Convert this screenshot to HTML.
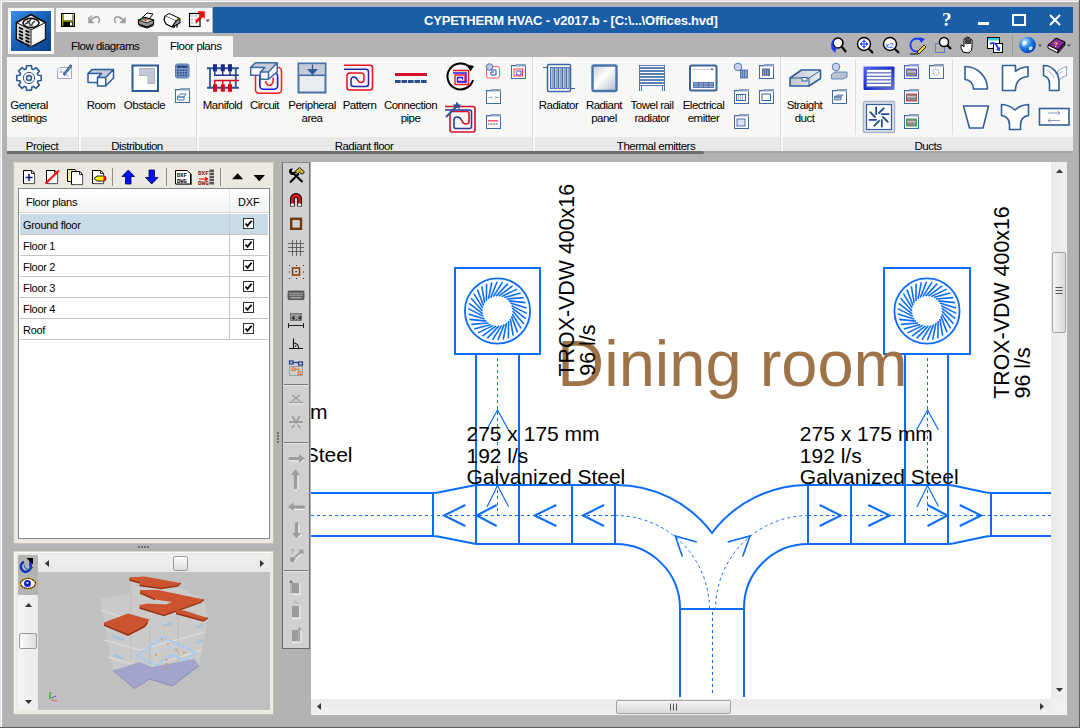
<!DOCTYPE html><html><head><meta charset="utf-8"><style>
*{margin:0;padding:0;box-sizing:border-box}
html,body{width:1080px;height:728px;overflow:hidden;background:#b3b3b3;font-family:"Liberation Sans",sans-serif;position:relative}
.a{position:absolute}
.t{position:absolute;white-space:pre;font-size:11px;color:#000;line-height:13px}
.rl{position:absolute;white-space:pre;font-size:11.5px;color:#000;line-height:13px;text-align:center;letter-spacing:-0.5px}
svg{position:absolute;overflow:visible}
</style></head><body>
<div class="a" style="left:0;top:0;width:1080px;height:1px;background:#dedede"></div>
<div class="a" style="left:0;top:1px;width:1078px;height:1px;background:#fbfbfb"></div>
<div class="a" style="left:0;top:0;width:1px;height:728px;background:#e2e2e2"></div>
<div class="a" style="left:1px;top:1px;width:1px;height:726px;background:#fbfbfb"></div>
<div class="a" style="left:1078px;top:2px;width:1px;height:725px;background:#ababab"></div>
<div class="a" style="left:1079px;top:0;width:1px;height:728px;background:#626262"></div>
<div class="a" style="left:2px;top:726px;width:1077px;height:1px;background:#ababab"></div>
<div class="a" style="left:0;top:727px;width:1080px;height:1px;background:#626262"></div>
<div class="a" style="left:8px;top:8px;width:46px;height:46px;background:#fbfbfb"></div>
<div class="a" style="left:11px;top:11px;width:40px;height:40px;background:linear-gradient(135deg,#3d8ee6 0%,#1a5fb4 50%,#0b3f86 100%)"></div>
<div class="a" style="left:56px;top:8px;width:156px;height:24px;background:#f8f8f8"></div>
<div class="a" style="left:213px;top:7px;width:860px;height:26px;background:#1a5ea8"></div>
<div class="a" style="left:424px;top:13px;font-size:13px;line-height:15px;font-weight:bold;color:#fff;white-space:pre;letter-spacing:-0.2px">CYPETHERM HVAC - v2017.b - [C:\...\Offices.hvd]</div>
<div class="a" style="left:158px;top:36px;width:75px;height:22px;background:#f7f7f5"></div>
<div class="t" style="left:71px;top:39.5px;color:#000;font-size:11.5px;letter-spacing:-0.5px">Flow diagrams</div>
<div class="t" style="left:170px;top:39.5px;color:#000;font-size:11.5px;letter-spacing:-0.5px">Floor plans</div>
<div class="a" style="left:7px;top:57px;width:1066px;height:94px;background:#f7f7f5"></div>
<div class="a" style="left:7px;top:137px;width:1066px;height:14px;background:#e8e8e8"></div>
<div class="a" style="left:7px;top:151px;width:697px;height:3px;background:#6d6d6d;border-radius:0 2px 2px 0"></div>
<div class="a" style="left:704px;top:151px;width:369px;height:2px;background:#a6a6a6"></div>
<div class="a" style="left:78px;top:57px;width:1px;height:94px;background:#d9d9d9"></div>
<div class="a" style="left:79px;top:57px;width:1px;height:94px;background:#fdfdfd"></div>
<div class="a" style="left:80px;top:57px;width:1px;height:94px;background:#f7f7f5"></div>
<div class="a" style="left:196px;top:57px;width:1px;height:94px;background:#d9d9d9"></div>
<div class="a" style="left:197px;top:57px;width:1px;height:94px;background:#fdfdfd"></div>
<div class="a" style="left:198px;top:57px;width:1px;height:94px;background:#f7f7f5"></div>
<div class="a" style="left:532px;top:57px;width:1px;height:94px;background:#d9d9d9"></div>
<div class="a" style="left:533px;top:57px;width:1px;height:94px;background:#fdfdfd"></div>
<div class="a" style="left:534px;top:57px;width:1px;height:94px;background:#f7f7f5"></div>
<div class="a" style="left:780px;top:57px;width:1px;height:94px;background:#d9d9d9"></div>
<div class="a" style="left:781px;top:57px;width:1px;height:94px;background:#fdfdfd"></div>
<div class="a" style="left:782px;top:57px;width:1px;height:94px;background:#f7f7f5"></div>
<div class="a" style="left:855px;top:60px;width:1px;height:75px;background:#dcdcdc"></div>
<div class="a" style="left:952px;top:60px;width:1px;height:75px;background:#dcdcdc"></div>
<div class="rl" style="left:-18px;top:140px;width:120px;height:11px;overflow:hidden;color:#000">Project</div>
<div class="rl" style="left:77px;top:140px;width:120px;height:11px;overflow:hidden;color:#000">Distribution</div>
<div class="rl" style="left:304px;top:140px;width:120px;height:11px;overflow:hidden;color:#000">Radiant floor</div>
<div class="rl" style="left:596px;top:140px;width:120px;height:11px;overflow:hidden;color:#000">Thermal emitters</div>
<div class="rl" style="left:868px;top:140px;width:120px;height:11px;overflow:hidden;color:#000">Ducts</div>
<div class="a" style="left:13px;top:162px;width:261px;height:382px;background:#ece9e3;border:1px solid #c4bfb1;border-left-color:#fff;border-top-color:#fff"></div>
<div class="a" style="left:13px;top:162px;width:261px;height:382px;border-left:1px solid #c4bfb1;border-top:1px solid #d8d4c8"></div>
<div class="a" style="left:18px;top:188px;width:252px;height:351px;background:#fff;border:1px solid #828790"></div>
<div class="a" style="left:19px;top:189px;width:250px;height:24px;background:linear-gradient(#ffffff,#f1f2f4)"></div>
<div class="a" style="left:19px;top:212px;width:250px;height:1px;background:#d5d5d5"></div>
<div class="a" style="left:229px;top:189px;width:1px;height:24px;background:#e4e4e4"></div>
<div class="t" style="left:26px;top:196px;color:#000;letter-spacing:-0.3px">Floor plans</div>
<div class="t" style="left:238px;top:196px;color:#000;letter-spacing:-0.2px">DXF</div>
<div class="a" style="left:20px;top:214px;width:248px;height:20px;background:#c8dce8"></div>
<div class="a" style="left:20px;top:234px;width:248px;height:1px;background:#c6c6c6"></div>
<div class="a" style="left:229px;top:213px;width:1px;height:21px;background:#c6c6c6"></div>
<div class="t" style="left:23px;top:219px;color:#000;letter-spacing:-0.3px">Ground floor</div>
<div class="a" style="left:243px;top:218px;width:11px;height:11px;background:#fff;border:1px solid #333"></div>
<svg style="left:243px;top:218px" width="11" height="11"><path d="M2.5 5.5 L4.5 7.8 L8.6 2.8" stroke="#000" stroke-width="1.8" fill="none"/></svg>
<div class="a" style="left:20px;top:255px;width:248px;height:1px;background:#c6c6c6"></div>
<div class="a" style="left:229px;top:234px;width:1px;height:21px;background:#c6c6c6"></div>
<div class="t" style="left:23px;top:240px;color:#000;letter-spacing:-0.3px">Floor 1</div>
<div class="a" style="left:243px;top:239px;width:11px;height:11px;background:#fff;border:1px solid #333"></div>
<svg style="left:243px;top:239px" width="11" height="11"><path d="M2.5 5.5 L4.5 7.8 L8.6 2.8" stroke="#000" stroke-width="1.8" fill="none"/></svg>
<div class="a" style="left:20px;top:276px;width:248px;height:1px;background:#c6c6c6"></div>
<div class="a" style="left:229px;top:255px;width:1px;height:21px;background:#c6c6c6"></div>
<div class="t" style="left:23px;top:261px;color:#000;letter-spacing:-0.3px">Floor 2</div>
<div class="a" style="left:243px;top:260px;width:11px;height:11px;background:#fff;border:1px solid #333"></div>
<svg style="left:243px;top:260px" width="11" height="11"><path d="M2.5 5.5 L4.5 7.8 L8.6 2.8" stroke="#000" stroke-width="1.8" fill="none"/></svg>
<div class="a" style="left:20px;top:297px;width:248px;height:1px;background:#c6c6c6"></div>
<div class="a" style="left:229px;top:276px;width:1px;height:21px;background:#c6c6c6"></div>
<div class="t" style="left:23px;top:282px;color:#000;letter-spacing:-0.3px">Floor 3</div>
<div class="a" style="left:243px;top:281px;width:11px;height:11px;background:#fff;border:1px solid #333"></div>
<svg style="left:243px;top:281px" width="11" height="11"><path d="M2.5 5.5 L4.5 7.8 L8.6 2.8" stroke="#000" stroke-width="1.8" fill="none"/></svg>
<div class="a" style="left:20px;top:318px;width:248px;height:1px;background:#c6c6c6"></div>
<div class="a" style="left:229px;top:297px;width:1px;height:21px;background:#c6c6c6"></div>
<div class="t" style="left:23px;top:303px;color:#000;letter-spacing:-0.3px">Floor 4</div>
<div class="a" style="left:243px;top:302px;width:11px;height:11px;background:#fff;border:1px solid #333"></div>
<svg style="left:243px;top:302px" width="11" height="11"><path d="M2.5 5.5 L4.5 7.8 L8.6 2.8" stroke="#000" stroke-width="1.8" fill="none"/></svg>
<div class="a" style="left:20px;top:339px;width:248px;height:1px;background:#c6c6c6"></div>
<div class="a" style="left:229px;top:318px;width:1px;height:21px;background:#c6c6c6"></div>
<div class="t" style="left:23px;top:324px;color:#000;letter-spacing:-0.3px">Roof</div>
<div class="a" style="left:243px;top:323px;width:11px;height:11px;background:#fff;border:1px solid #333"></div>
<svg style="left:243px;top:323px" width="11" height="11"><path d="M2.5 5.5 L4.5 7.8 L8.6 2.8" stroke="#000" stroke-width="1.8" fill="none"/></svg>
<div class="a" style="left:138px;top:546px;width:2px;height:2px;background:#6e6e6e"></div>
<div class="a" style="left:141px;top:546px;width:2px;height:2px;background:#6e6e6e"></div>
<div class="a" style="left:144px;top:546px;width:2px;height:2px;background:#6e6e6e"></div>
<div class="a" style="left:147px;top:546px;width:2px;height:2px;background:#6e6e6e"></div>
<div class="a" style="left:13px;top:551px;width:261px;height:164px;background:#ece9e3;border:1px solid #c4bfb1;border-left-color:#c4bfb1;border-top-color:#d8d4c8"></div>
<div class="a" style="left:14px;top:552px;width:259px;height:162px;border-left:1px solid #fff;border-top:1px solid #fff"></div>
<div class="a" style="left:18px;top:555px;width:252px;height:155px;background:#c0c0c0"></div>
<div class="a" style="left:18px;top:555px;width:20px;height:40px;background:#b4b4b4"></div>
<div class="a" style="left:18px;top:595px;width:20px;height:115px;background:linear-gradient(90deg,#f3f3f3,#ececec)"></div>
<div class="a" style="left:38px;top:555px;width:232px;height:17px;background:linear-gradient(#efefef,#e8e8e8)"></div>
<svg style="left:45px;top:560px" width="5" height="8"><path d="M4 0 L0 3.5 L4 7Z" fill="#333"/></svg>
<svg style="left:260px;top:560px" width="5" height="8"><path d="M0 0 L4 3.5 L0 7Z" fill="#333"/></svg>
<div class="a" style="left:173px;top:556px;width:15px;height:15px;background:linear-gradient(#fdfdfd,#dcdcdc);border:1px solid #9a9a9a;border-radius:2px"></div>
<svg style="left:25px;top:603px" width="8" height="4"><path d="M0 4 L3.5 0 L7 4Z" fill="#333"/></svg>
<svg style="left:25px;top:700px" width="8" height="4"><path d="M0 0 L3.5 4 L7 0Z" fill="#333"/></svg>
<div class="a" style="left:19px;top:633px;width:18px;height:16px;background:linear-gradient(90deg,#fdfdfd,#dcdcdc);border:1px solid #9a9a9a;border-radius:2px"></div>
<div class="a" style="left:282px;top:162px;width:28px;height:487px;background:#d0d0d0;border:1px solid #6c6c6c;border-top-color:#8a8a8a"></div>
<div class="a" style="left:284px;top:384px;width:24px;height:1px;background:#7a7a7a"></div>
<div class="a" style="left:284px;top:385px;width:24px;height:1px;background:#e6e6e6"></div>
<div class="a" style="left:284px;top:442px;width:24px;height:1px;background:#7a7a7a"></div>
<div class="a" style="left:284px;top:443px;width:24px;height:1px;background:#e6e6e6"></div>
<div class="a" style="left:284px;top:570px;width:24px;height:1px;background:#7a7a7a"></div>
<div class="a" style="left:284px;top:571px;width:24px;height:1px;background:#e6e6e6"></div>
<div class="a" style="left:277px;top:432px;width:2px;height:2px;background:#6e6e6e"></div>
<div class="a" style="left:277px;top:435px;width:2px;height:2px;background:#6e6e6e"></div>
<div class="a" style="left:277px;top:438px;width:2px;height:2px;background:#6e6e6e"></div>
<div class="a" style="left:277px;top:441px;width:2px;height:2px;background:#6e6e6e"></div>
<div class="a" style="left:311px;top:162px;width:740px;height:537px;background:#fff;overflow:hidden" id="cv"></div>
<div class="a" style="left:1051px;top:162px;width:16px;height:537px;background:linear-gradient(90deg,#eaeaea,#f0f0f0)"></div>
<svg style="left:1056px;top:169px" width="8" height="4"><path d="M0 4 L3.5 0 L7 4Z" fill="#3a3a3a"/></svg>
<svg style="left:1056px;top:688px" width="8" height="4"><path d="M0 0 L3.5 4 L7 0Z" fill="#3a3a3a"/></svg>
<div class="a" style="left:1052px;top:252px;width:14px;height:81px;background:linear-gradient(90deg,#f4f4f4,#d8d8d8);border:1px solid #a4a4a4;border-radius:2px"></div>
<svg style="left:1054px;top:286px" width="10" height="9"><path d="M1.5 1.5H8.5M1.5 4.5H8.5M1.5 7.5H8.5" stroke="#555" stroke-width="1"/></svg>
<div class="a" style="left:311px;top:699px;width:756px;height:16px;background:linear-gradient(#eaeaea,#f0f0f0)"></div>
<div class="a" style="left:1051px;top:699px;width:16px;height:16px;background:#f0f0f0"></div>
<svg style="left:317px;top:703px" width="4" height="8"><path d="M4 0 L0 3.5 L4 7Z" fill="#3a3a3a"/></svg>
<svg style="left:1040px;top:703px" width="4" height="8"><path d="M0 0 L4 3.5 L0 7Z" fill="#3a3a3a"/></svg>
<div class="a" style="left:616px;top:700px;width:115px;height:14px;background:linear-gradient(#f4f4f4,#d8d8d8);border:1px solid #a4a4a4;border-radius:2px"></div>
<svg style="left:669px;top:702px" width="9" height="10"><path d="M1.5 1.5V8.5M4.5 1.5V8.5M7.5 1.5V8.5" stroke="#555" stroke-width="1"/></svg>
<svg style="left:11px;top:11px" width="40" height="40" viewBox="11 11 40 40"><path d="M31 14.6 L45.3 22.5 L45.3 39 L31 46.7 L16.5 39 L16.5 22.5 Z" fill="#fff" stroke="#000" stroke-width="1.6"/><path d="M16.5 22.5 L31 30 L31 46.7 L16.5 39Z" fill="#d2d2d2" stroke="#111" stroke-width="1"/><path d="M31 30 L45.3 22.5 L45.3 39 L31 46.7Z" fill="#fafafa" stroke="#111" stroke-width="1"/><path d="M31 30 L31 46.7" stroke="#888" stroke-width="1.5"/><ellipse cx="31" cy="23" rx="8" ry="4.6" fill="#f4f4f4" stroke="#111" stroke-width="1.6"/><path d="M27 21 Q31 24 30 26 M35 21 Q31 24 32 26 M31 19 Q29 23 25 24" stroke="#333" stroke-width="1.4" fill="none"/><path d="M19.0 27.5 l4 2" stroke="#000" stroke-width="1.8"/><path d="M25.5 30.5 l4 2" stroke="#000" stroke-width="1.8"/><path d="M19.0 30.8 l4 2" stroke="#000" stroke-width="1.8"/><path d="M25.5 33.8 l4 2" stroke="#000" stroke-width="1.8"/><path d="M19.0 34.1 l4 2" stroke="#000" stroke-width="1.8"/><path d="M25.5 37.1 l4 2" stroke="#000" stroke-width="1.8"/><path d="M19.0 37.4 l4 2" stroke="#000" stroke-width="1.8"/><path d="M25.5 40.4 l4 2" stroke="#000" stroke-width="1.8"/><path d="M19.0 40.7 l4 2" stroke="#000" stroke-width="1.8"/><path d="M25.5 43.7 l4 2" stroke="#000" stroke-width="1.8"/></svg>
<svg style="left:61px;top:13px" width="14" height="14" viewBox="61 13 14 14"><rect x="61" y="13" width="14" height="14" fill="#000"/><rect x="62" y="14" width="1.3" height="12" fill="#9a9a10"/><rect x="72.7" y="14" width="1.3" height="12" fill="#9a9a10"/><rect x="63.5" y="14" width="9" height="6.5" fill="#fff"/><rect x="62.5" y="20.5" width="11" height="1.3" fill="#9a9a10"/><rect x="70" y="22.5" width="2" height="3" fill="#fff"/><rect x="73" y="14" width="1" height="1" fill="#fff"/></svg>
<svg style="left:87px;top:14px" width="15" height="10" viewBox="87 14 15 10"><path d="M89 18.5 L92 15.5 M89 18.5 L89 22.5 L93 22.5Z" stroke="#9e9e9e" stroke-width="1.5" fill="#9e9e9e"/><path d="M90 21 Q94 16 98 17 Q101 19.5 98 23" stroke="#9e9e9e" stroke-width="1.6" fill="none"/></svg>
<svg style="left:112px;top:14px" width="15" height="10" viewBox="112 14 15 10"><path d="M125 22.5 L121 22.5 L125 18.5Z" stroke="#9e9e9e" stroke-width="1.5" fill="#9e9e9e"/><path d="M124 21 Q120 16 116 17 Q113 19.5 116 23" stroke="#9e9e9e" stroke-width="1.6" fill="none"/></svg>
<svg style="left:137px;top:11px" width="19" height="18" viewBox="137 11 19 18"><path d="M142 18 L147 13 L153 14 L149 19Z" fill="#fff" stroke="#000" stroke-width="1"/><path d="M138.5 20 L145 17.5 L153.5 20 L153.5 24 L147 27 L138.5 24Z" fill="#9a9a9a" stroke="#000" stroke-width="1.2"/><path d="M138.5 20 L147 23 L153.5 20" fill="#cfcfcf" stroke="#000" stroke-width="0.8"/><path d="M139 25.5 L147 28 L153.5 25.5" fill="none" stroke="#000" stroke-width="1"/><rect x="142" y="18.5" width="2" height="1.3" fill="#10c010"/><rect x="144.5" y="19.5" width="2" height="1.3" fill="#e01010"/></svg>
<svg style="left:162px;top:12px" width="20" height="17" viewBox="162 12 20 17"><path d="M165 16 L169 13.5 L180 18.5 L176 21 Z" fill="#fff" stroke="#000" stroke-width="1"/><path d="M165 16 L164 20 L166 24 L172 27 L176 21" fill="#fff" stroke="#000" stroke-width="1.2"/><path d="M172 27 L176 21 L180 18.5 L180 23 L174 26.5Z" fill="#8a8a8a" stroke="#000" stroke-width="1"/><path d="M174 25 V28 M177 24 V27.5" stroke="#000" stroke-width="1.2"/><rect x="176.5" y="18.5" width="1.5" height="1.3" fill="#10c010"/><rect x="178" y="18" width="1.5" height="1.3" fill="#e01010"/></svg>
<svg style="left:188px;top:11px" width="24" height="17" viewBox="188 11 24 17"><rect x="189.5" y="13.5" width="10.5" height="13" fill="#fff" stroke="#000" stroke-width="1.2"/><path d="M191 16H193M194.5 16H197M191 19.5H193M194.5 19.5H197M191 23H193M194.5 23H197" stroke="#c8c8c8" stroke-width="2"/><path d="M196 22 L203 15" stroke="#ff0000" stroke-width="2.6"/><path d="M199 12 L204 12 L204 17Z" fill="#ff0000" stroke="#ff0000" stroke-width="1.5"/><path d="M205.5 19.5 H210 L207.75 22Z" fill="#444"/></svg>
<div class="a" style="left:942px;top:9px;font-family:'Liberation Serif';font-weight:bold;font-size:19px;line-height:22px;color:#fff">?</div>
<div class="a" style="left:978px;top:22px;width:11px;height:3px;background:#fff"></div>
<div class="a" style="left:1012px;top:14px;width:14px;height:12px;border:2px solid #fff;border-top-width:2px"></div>
<svg style="left:1047px;top:13px" width="16" height="14" viewBox="1047 13 16 14"><path d="M1050 15 L1060 25 M1060 15 L1050 25" stroke="#fff" stroke-width="2"/></svg>
<svg style="left:826px;top:34px" width="180" height="22" viewBox="826 34 180 22"><circle cx="838" cy="43" r="5" fill="#fff" stroke="#000" stroke-width="1.6"/><path d="M842 47 L846 52" stroke="#000" stroke-width="2.2"/><path d="M834 40 Q830 45 834 50" stroke="#1a3cff" stroke-width="2" fill="none"/><path d="M831 48 L835 53 L837 47Z" fill="#1a3cff"/><circle cx="864" cy="44" r="6.5" fill="#fff" stroke="#000" stroke-width="1.4"/><path d="M869 49 L873 53" stroke="#000" stroke-width="2.2"/><path d="M864 39.5 L862 42 H866Z M864 48.5 L862 46 H866Z M859.5 44 L862 42 V46Z M868.5 44 L866 42 V46Z" fill="#1a3cff"/><path d="M864 41V47M861 44H867" stroke="#1a3cff" stroke-width="1"/><circle cx="890" cy="44" r="6.5" fill="#fff" stroke="#000" stroke-width="1.4"/><path d="M895 49 L899 53" stroke="#000" stroke-width="2.2"/><text x="885.2" y="47.5" font-size="8" fill="#1a3cff" font-family="Liberation Sans">x2</text><path d="M922 41 A6.5 6.5 0 1 0 918 51.5" stroke="#1a3cff" stroke-width="2" fill="none"/><path d="M919 37 L925 39 L921 43Z" fill="#1a3cff"/><path d="M917 52 L924 45 L926 47 L919 54Z" fill="#f0d020" stroke="#000" stroke-width="0.8"/><path d="M910 54 H918" stroke="#000" stroke-width="1"/><rect x="935.5" y="43.5" width="9" height="9" fill="none" stroke="#1a3cff" stroke-width="1" stroke-dasharray="1 1"/><circle cx="944" cy="42" r="4.5" fill="#fff" stroke="#000" stroke-width="1.4"/><path d="M947 45 L951 49" stroke="#000" stroke-width="2.2"/><path d="M963 52 Q960 48 961 45 L962 45 Q963 46 964 47 V39 Q965 38 966 39 V44 V37.5 Q967 36.5 968 37.5 V44 V38 Q969 37 970 38 V44 V40 Q971 39 972 40 V47 Q972 51 969 53 Z" fill="#fff" stroke="#000" stroke-width="1"/><rect x="987.5" y="37.5" width="12" height="11" fill="#fff" stroke="#000" stroke-width="1"/><rect x="988" y="38" width="11" height="2.5" fill="#30d0e8"/><rect x="993.5" y="43.5" width="9" height="9" fill="#fff" stroke="#000" stroke-width="1"/><path d="M990 44 Q994 41 997 46 L999 50" stroke="#1a3cff" stroke-width="1.8" fill="none"/><path d="M996 50 L1000 51 L1000 47Z" fill="#1a3cff"/></svg>
<div class="a" style="left:1012px;top:36px;width:1px;height:20px;background:#9a9a9a"></div>
<svg style="left:1016px;top:34px" width="60" height="22" viewBox="1016 34 60 22"><defs><radialGradient id="gl" cx="0.35" cy="0.3" r="0.8"><stop offset="0" stop-color="#bfe4ff"/><stop offset="0.5" stop-color="#1a7ae8"/><stop offset="1" stop-color="#0a2a9c"/></radialGradient></defs><circle cx="1027.5" cy="45" r="8.3" fill="url(#gl)"/><path d="M1022 42 Q1025 40 1027 42 Q1026 46 1023 46Z M1029 47 Q1032 45 1033 48 Q1031 51 1029 50Z" fill="#fff" opacity="0.8"/><path d="M1038 44.5 H1042 L1040 47Z" fill="#555"/><path d="M1048 45 L1056 38 L1065 42 L1058 50Z" fill="#8a2aa0" stroke="#000" stroke-width="1"/><path d="M1048 45 L1048 48 L1058 53 L1058 50Z" fill="#fff" stroke="#000" stroke-width="1"/><path d="M1058 50 L1065 42 L1065 45 L1058 53Z" fill="#5a1a70" stroke="#000" stroke-width="0.8"/><text x="1053.5" y="47" font-size="7" font-weight="bold" fill="#ffd400" font-family="Liberation Sans">?</text><path d="M1067 44.5 H1071 L1069 47Z" fill="#555"/></svg>
<svg style="left:14px;top:62px" width="62" height="32" viewBox="14 62 62 32"><polygon points="38.08,75.19 41.25,75.52 41.25,80.48 38.08,80.81 37.40,82.43 39.42,84.91 35.91,88.42 33.43,86.40 31.81,87.08 31.48,90.25 26.52,90.25 26.19,87.08 24.57,86.40 22.09,88.42 18.58,84.91 20.60,82.43 19.92,80.81 16.75,80.48 16.75,75.52 19.92,75.19 20.60,73.57 18.58,71.09 22.09,67.58 24.57,69.60 26.19,68.92 26.52,65.75 31.48,65.75 31.81,68.92 33.43,69.60 35.91,67.58 39.42,71.09 37.40,73.57" fill="#fff" stroke="#2b5b98" stroke-width="1.6" stroke-linejoin="round"/><circle cx="29" cy="78" r="5.6" fill="none" stroke="#2b5b98" stroke-width="1"/><circle cx="29" cy="78" r="2.4" fill="none" stroke="#2b5b98" stroke-width="1.6"/><path d="M57.5 70 L60 67.5 H71.5 V78.5 H57.5Z" fill="#fff" stroke="#9aa8c0" stroke-width="1"/><path d="M59 72 H64 V75 H68 V77 M61 69 V73" stroke="#b0bcd0" stroke-width="1" fill="none"/><path d="M63 74 L70.5 64.5 L72 66 L64.5 75.5Z" fill="#5a7ab0" stroke="#3a5a98" stroke-width="0.8"/></svg>
<svg style="left:84px;top:60px" width="108" height="46" viewBox="84 60 108 46"><path d="M92 69.5 H113.5 L105.7 77.5 H97.5 L101.4 73.6 H88Z" fill="#c3c9d6"/><path d="M88 73.6 H101.4 L97.5 77.5 V82.5 H88Z M97.5 77.5 H105.7 V86 H97.5Z M105.7 77.5 L113.5 69.5 V78 L105.7 86Z" fill="#fff"/><path d="M92 69.5 H113.5 V78 L105.5 86 H97.5 V82.5 H88 V73.6 Z M88 73.6 H101.4 L97.5 77.5 H105.7 L113.5 69.5 M97.5 77.5 V82.5 M105.7 77.5 V86" fill="none" stroke="#2b5b98" stroke-width="1.5" stroke-linejoin="round"/><rect x="132.5" y="65.5" width="25.5" height="25.5" fill="#fff" stroke="#2b5b98" stroke-width="2"/><path d="M139.5 68.5 H154.5 V83.5 H148 V75.5 H139.5Z" fill="#c3c9d6" stroke="#a8b2c6" stroke-width="1"/><rect x="175.5" y="64" width="13.5" height="14" rx="2" fill="#7f9cc8" stroke="#5a7ab0" stroke-width="1"/><rect x="177" y="65.5" width="10.5" height="2.5" fill="#2a4a8c"/><rect x="177.0" y="69.5" width="1.8" height="1.6" fill="#2a4a8c"/><rect x="179.8" y="69.5" width="1.8" height="1.6" fill="#2a4a8c"/><rect x="182.6" y="69.5" width="1.8" height="1.6" fill="#2a4a8c"/><rect x="185.4" y="69.5" width="1.8" height="1.6" fill="#2a4a8c"/><rect x="177.0" y="72.1" width="1.8" height="1.6" fill="#2a4a8c"/><rect x="179.8" y="72.1" width="1.8" height="1.6" fill="#2a4a8c"/><rect x="182.6" y="72.1" width="1.8" height="1.6" fill="#2a4a8c"/><rect x="185.4" y="72.1" width="1.8" height="1.6" fill="#2a4a8c"/><rect x="177.0" y="74.7" width="1.8" height="1.6" fill="#2a4a8c"/><rect x="179.8" y="74.7" width="1.8" height="1.6" fill="#2a4a8c"/><rect x="182.6" y="74.7" width="1.8" height="1.6" fill="#2a4a8c"/><rect x="185.4" y="74.7" width="1.8" height="1.6" fill="#2a4a8c"/><rect x="175.5" y="89.5" width="14" height="13" fill="#fff" stroke="#3f6aa6" stroke-width="1"/><rect x="180" y="88" width="10" height="3" fill="#8aa0c0"/><rect x="176" y="90" width="13" height="1" fill="#c9d3e3"/><path d="M177.5 97 L180 94 H186 L184 97Z M177.5 97 H184 V100 H177.5Z" fill="#fff" stroke="#3f6aa6" stroke-width="0.9"/></svg>
<svg style="left:200px;top:58px" width="330" height="80" viewBox="200 58 330 80"><path d="M207 68.3 H238.8 M207 87.8 H238.8" stroke="#234f8c" stroke-width="2"/><path d="M210 68 V88 M235.8 68 V88" stroke="#2b5b98" stroke-width="1.8"/><path d="M214.8 71 V75.3 H238.8 M222.7 71 V75.3 M230 71 V75.3" stroke="#1e3290" stroke-width="1.4" fill="none"/><rect x="213" y="64.2" width="4" height="7.2" fill="#1a2a8c"/><rect x="220.8" y="64.2" width="4" height="7.2" fill="#1a2a8c"/><rect x="228" y="64.2" width="4" height="7.2" fill="#1a2a8c"/><path d="M214.8 84.3 V80.5 H238.8 M222.7 84.3 V80.5 M230 84.3 V80.5" stroke="#e0001a" stroke-width="1.4" fill="none"/><rect x="213" y="84.2" width="4" height="7.6" fill="#e0001a"/><rect x="220.8" y="84.2" width="4" height="7.6" fill="#e0001a"/><rect x="228" y="84.2" width="4" height="7.6" fill="#e0001a"/><rect x="255.5" y="67.5" width="26" height="25.7" rx="3.5" fill="none" stroke="#ff1a1a" stroke-width="1.5"/><rect x="259.8" y="72.5" width="17.8" height="16.7" rx="3.5" fill="none" stroke="#1a1aff" stroke-width="1.6"/><path d="M265.5 81 Q267 86 269.5 85.5 Q273.5 85 273.2 77.5" fill="none" stroke="#ff1a1a" stroke-width="1.5"/><path d="M255.4 62.7 H277.2 L268.5 71.9 H260.4 L264.8 67.4 H250.7Z" fill="#c3c9d6"/><path d="M250.7 67.4 H264.8 L260.4 71.9 V75.3 H250.7Z M260.4 71.9 H268.5 V79.3 H260.4Z M268.5 71.9 L277.2 62.7 V71.9 L268.5 79.3Z" fill="#fff"/><path d="M255.4 62.7 H277.2 V71.9 L268.5 79.3 H260.4 V75.3 H250.7 V67.4Z M250.7 67.4 H264.8 L260.4 71.9 H268.5 L277.2 62.7 M260.4 71.9 V75.3 M268.5 71.9 V79.3" fill="none" stroke="#3a6aa6" stroke-width="1.5" stroke-linejoin="round"/><rect x="298.5" y="63.5" width="27" height="29" fill="#e6e9ef" stroke="#4a74aa" stroke-width="2"/><rect x="299.5" y="64.5" width="25" height="10.5" fill="#c5cbd8"/><path d="M299 75.3 H325" stroke="#3f6aa6" stroke-width="1.5"/><path d="M307 69 H318 L312.5 75Z" fill="#2b5b98"/><path d="M312.5 64.5 V70" stroke="#2b5b98" stroke-width="1.4"/><path d="M301 78 H323 M301 81 H323 M301 84 H323 M301 87 H323 M301 90 H323" stroke="#f6f7f9" stroke-width="1.2" stroke-dasharray="1.5 1.5"/><path d="M344 65.3 H370 Q372.5 65.3 372.5 68 V87.5 Q372.5 90 370 90 H350 Q347 90 347 87.5 V75.8 Q347 73 350 73 H361 Q364 73 364 76 V79.5 Q364 82.5 361 82.5 Q358.5 82.5 357.5 80" fill="none" stroke="#e8101e" stroke-width="1.5"/><path d="M344 69.3 H366 Q368.5 69.3 368.5 72 V84 Q368.5 86.5 366 86.5 H354 Q351 86.5 351 84 V80 Q351 77 354 77 Q356 77 357.5 80" fill="none" stroke="#1e2a9c" stroke-width="1.5"/><rect x="395" y="73" width="32" height="3" fill="#d8102a"/><rect x="395.0" y="80" width="5.6" height="3" fill="#2a4e8e"/><rect x="401.5" y="80" width="5.6" height="3" fill="#2a4e8e"/><rect x="408.0" y="80" width="5.6" height="3" fill="#2a4e8e"/><rect x="414.5" y="80" width="5.6" height="3" fill="#2a4e8e"/><rect x="421.0" y="80" width="5.6" height="3" fill="#2a4e8e"/><path d="M470 67.5 A13 13 0 1 0 473 80" fill="none" stroke="#000" stroke-width="2"/><path d="M466.5 64.5 L474 66 L470.5 71.5Z" fill="#000"/><path d="M453 70.5 H468.5 V84.5 H455 V75 H465 V81.5 H458" fill="none" stroke="#ff1a1a" stroke-width="1.4"/><path d="M453 73 H466 V82 H457.5 V77.5 H462.5 V79.5" fill="none" stroke="#1a1aff" stroke-width="1.4"/><path d="M445 106.5 H473 Q475 106.5 475 108.5 V130 Q475 132 473 132 H452 Q450 132 450 130 V113.5 Q450 111.5 452 111.5 H467 Q469 111.5 469 113.5 V121 Q469 124 466 124 Q463 124 461.5 120" fill="none" stroke="#d8102a" stroke-width="1.6"/><path d="M445 110 H469.5 Q471.5 110 471.5 112 V126.5 Q471.5 128.5 469.5 128.5 H456 Q454 128.5 454 126.5 V120 Q454 117 457 117 Q460 117 461.5 120" fill="none" stroke="#2a3c98" stroke-width="1.6"/><path d="M446 117 L457 106" stroke="#2a5a98" stroke-width="2"/><path d="M457 101.5 L458.5 104.5 L461.5 104.5 L459 106.5 L460 109.5 L457 107.5 L454 109.5 L455 106.5 L452.5 104.5 L455.5 104.5Z" fill="#2a4e98"/><rect x="486.5" y="66.5" width="13" height="11.5" rx="2" fill="#fff" stroke="#ff5a5a" stroke-width="1"/><path d="M490 70 H496 V75 H491 V72 H494" stroke="#2a3cd0" stroke-width="1" fill="none"/><circle cx="489.5" cy="67" r="3.3" fill="#b8c8e8" stroke="#5a7ab0" stroke-width="1"/><rect x="511.5" y="65.5" width="14" height="13" fill="#fff" stroke="#3f6aa6" stroke-width="1"/><rect x="516" y="64" width="10" height="3" fill="#8aa0c0"/><rect x="512" y="66" width="13" height="1" fill="#c9d3e3"/><rect x="514" y="69" width="8.5" height="7" fill="none" stroke="#ff3a3a" stroke-width="1"/><path d="M515.5 71 H521 V75 H516.5 V72.5" stroke="#2a3cd0" stroke-width="0.9" fill="none"/><rect x="486.5" y="90.5" width="14" height="13" fill="#fff" stroke="#3f6aa6" stroke-width="1"/><rect x="491" y="89" width="10" height="3" fill="#8aa0c0"/><rect x="487" y="91" width="13" height="1" fill="#c9d3e3"/><path d="M488.5 97.5 H491 M496 97.5 H498.5" stroke="#8aa0c0" stroke-width="1"/><path d="M491 97.5 L492.5 96 M491 97.5 L492.5 99 M496 97.5 L494.5 96 M496 97.5 L494.5 99" stroke="#8aa0c0" stroke-width="0.9"/><rect x="486.5" y="115.5" width="14" height="13" fill="#fff" stroke="#3f6aa6" stroke-width="1"/><rect x="491" y="114" width="10" height="3" fill="#8aa0c0"/><rect x="487" y="116" width="13" height="1" fill="#c9d3e3"/><rect x="488" y="120" width="10" height="1.6" fill="#ff5a6a"/><path d="M488 124 H498" stroke="#333" stroke-width="1" stroke-dasharray="1 0.6"/></svg>
<svg style="left:538px;top:58px" width="240" height="80" viewBox="538 58 240 80"><rect x="547.5" y="64.5" width="23" height="27" rx="1.5" fill="#fff" stroke="#3a64a0" stroke-width="1.5"/><path d="M543 67.5 H547.5 M570.5 88.5 H575" stroke="#3a64a0" stroke-width="1"/><rect x="550.5" y="67.5" width="2.6" height="21" fill="#b9c6dc" stroke="#3a64a0" stroke-width="0.9"/><rect x="554.5" y="67.5" width="2.6" height="21" fill="#b9c6dc" stroke="#3a64a0" stroke-width="0.9"/><rect x="558.5" y="67.5" width="2.6" height="21" fill="#b9c6dc" stroke="#3a64a0" stroke-width="0.9"/><rect x="562.5" y="67.5" width="2.6" height="21" fill="#b9c6dc" stroke="#3a64a0" stroke-width="0.9"/><rect x="566.5" y="67.5" width="2.6" height="21" fill="#b9c6dc" stroke="#3a64a0" stroke-width="0.9"/><defs><linearGradient id="rp" x1="0" y1="0" x2="1" y2="1"><stop offset="0" stop-color="#c8ccd8"/><stop offset="0.45" stop-color="#ffffff"/><stop offset="1" stop-color="#b0b8c8"/></linearGradient></defs><rect x="592.5" y="65.5" width="24" height="25.5" rx="1.5" fill="url(#rp)" stroke="#4a74aa" stroke-width="2.4"/><path d="M639.5 65.5 V91 M664.5 65.5 V91 M641.5 65.5 V91 M662.5 65.5 V91" stroke="#4a74aa" stroke-width="1"/><rect x="639.5" y="65.5" width="25" height="2" fill="#fff" stroke="#4a74aa" stroke-width="0.9"/><rect x="639.5" y="68.5" width="25" height="2" fill="#fff" stroke="#4a74aa" stroke-width="0.9"/><rect x="639.5" y="71.5" width="25" height="2" fill="#fff" stroke="#4a74aa" stroke-width="0.9"/><rect x="639.5" y="74.5" width="25" height="2" fill="#fff" stroke="#4a74aa" stroke-width="0.9"/><rect x="639.5" y="77.5" width="25" height="2" fill="#fff" stroke="#4a74aa" stroke-width="0.9"/><rect x="639.5" y="80.5" width="25" height="2" fill="#fff" stroke="#4a74aa" stroke-width="0.9"/><rect x="639.5" y="83.5" width="25" height="2" fill="#fff" stroke="#4a74aa" stroke-width="0.9"/><rect x="690" y="65.5" width="26.5" height="25" rx="1.5" fill="#fff" stroke="#3a64a0" stroke-width="2"/><path d="M692 69.5 H714" stroke="#c8cde0" stroke-width="1"/><rect x="711" y="68.5" width="2" height="1.5" fill="#2b5b98"/><rect x="693.5" y="82.5" width="20" height="5" fill="#8fa2c8" stroke="#3a64a0" stroke-width="0.8"/><path d="M693.5 85 H713.5 M698.5 82.5 V87.5 M703.5 82.5V87.5 M708.5 82.5 V87.5" stroke="#3a64a0" stroke-width="0.7"/><circle cx="738" cy="67" r="3.8" fill="#c8d4ea" stroke="#5a7ab0" stroke-width="1"/><rect x="740.5" y="70" width="7" height="8" fill="#8fa2c8" stroke="#3a64a0" stroke-width="0.8"/><path d="M742.5 70 V78 M744.5 70 V78" stroke="#3a64a0" stroke-width="0.6"/><rect x="759.5" y="65.5" width="14" height="13" fill="#fff" stroke="#3f6aa6" stroke-width="1"/><rect x="764" y="64" width="10" height="3" fill="#8aa0c0"/><rect x="760" y="66" width="13" height="1" fill="#c9d3e3"/><rect x="762" y="68.5" width="8" height="7.5" fill="#5a72a0"/><path d="M763.5 70 V76 M765.5 70 V76 M767.5 70 V76" stroke="#a8b8d0" stroke-width="0.6"/><rect x="734.5" y="90.5" width="14" height="13" fill="#fff" stroke="#3f6aa6" stroke-width="1"/><rect x="739" y="89" width="10" height="3" fill="#8aa0c0"/><rect x="735" y="91" width="13" height="1" fill="#c9d3e3"/><rect x="736.5" y="94.5" width="9" height="6" fill="#fff" stroke="#3a64a0" stroke-width="1"/><path d="M738.5 95 V100 M740.5 95 V100 M742.5 95V100" stroke="#8a9cc0" stroke-width="0.8"/><rect x="759.5" y="90.5" width="14" height="13" fill="#fff" stroke="#3f6aa6" stroke-width="1"/><rect x="764" y="89" width="10" height="3" fill="#8aa0c0"/><rect x="760" y="91" width="13" height="1" fill="#c9d3e3"/><rect x="762" y="94" width="8.5" height="6.5" fill="#fff" stroke="#3a64a0" stroke-width="1"/><rect x="734.5" y="115.5" width="14" height="13" fill="#fff" stroke="#3f6aa6" stroke-width="1"/><rect x="739" y="114" width="10" height="3" fill="#8aa0c0"/><rect x="735" y="116" width="13" height="1" fill="#c9d3e3"/><rect x="737" y="119" width="8" height="7" fill="#dde3ee" stroke="#3a64a0" stroke-width="0.9"/></svg>
<svg style="left:784px;top:58px" width="290" height="80" viewBox="784 58 290 80"><defs><linearGradient id="sd" x1="0" y1="0" x2="1" y2="0"><stop offset="0" stop-color="#c0c6d4"/><stop offset="1" stop-color="#e8ecf2"/></linearGradient></defs><path d="M790 78 L801.5 70 H820.5 V78.5 L809 86 H790Z" fill="url(#sd)" stroke="#2f5e9a" stroke-width="1.6" stroke-linejoin="round"/><path d="M790 78 H809 L820.5 70.5 M809 78 V86" stroke="#2f5e9a" stroke-width="1" fill="none"/><rect x="802" y="77.5" width="5" height="3.5" fill="#fff" stroke="#2f5e9a" stroke-width="1"/><circle cx="836" cy="67" r="3.8" fill="#c8d4ea" stroke="#5a7ab0" stroke-width="1"/><path d="M831.5 74.5 L835 72 H847 V77 L843 79 H831.5Z" fill="#b8c2d4" stroke="#5a7ab0" stroke-width="0.9"/><rect x="832.5" y="90.5" width="14" height="13" fill="#fff" stroke="#3f6aa6" stroke-width="1"/><rect x="837" y="89" width="10" height="3" fill="#8aa0c0"/><rect x="833" y="91" width="13" height="1" fill="#c9d3e3"/><path d="M834.5 97 L837 95 H843 L841 97Z M834.5 97 H841 V100 H834.5Z" fill="#b8c2d4" stroke="#3f6aa6" stroke-width="0.8"/><defs><linearGradient id="gr" x1="0" y1="0" x2="1" y2="1"><stop offset="0" stop-color="#5a6aff"/><stop offset="0.5" stop-color="#1a2acc"/><stop offset="1" stop-color="#6a78e0"/></linearGradient></defs><rect x="863.5" y="66.5" width="31" height="23.5" rx="1" fill="url(#gr)"/><rect x="866" y="69" width="26" height="18.5" fill="#5a72b0"/><rect x="867" y="70.0" width="24" height="2.2" fill="#fff"/><rect x="867" y="73.5" width="24" height="2.2" fill="#fff"/><rect x="867" y="77.0" width="24" height="2.2" fill="#fff"/><rect x="867" y="80.5" width="24" height="2.2" fill="#fff"/><rect x="867" y="84.0" width="24" height="2.2" fill="#fff"/><rect x="863.5" y="101.5" width="31" height="31" rx="1.5" fill="#dfe4ee" stroke="#a8b4c8" stroke-width="1.5"/><rect x="866.5" y="104.5" width="25" height="25" fill="#fff" stroke="#2f5e9a" stroke-width="1.2"/><path d="M883.0 117.0 L887.8 121.8" stroke="#1e4a8c" stroke-width="1.8" stroke-linecap="round"/><path d="M881.8 119.8 L881.8 126.6" stroke="#1e4a8c" stroke-width="1.8" stroke-linecap="round"/><path d="M879.0 121.0 L874.2 125.8" stroke="#1e4a8c" stroke-width="1.8" stroke-linecap="round"/><path d="M876.2 119.8 L869.4 119.8" stroke="#1e4a8c" stroke-width="1.8" stroke-linecap="round"/><path d="M875.0 117.0 L870.2 112.2" stroke="#1e4a8c" stroke-width="1.8" stroke-linecap="round"/><path d="M876.2 114.2 L876.2 107.4" stroke="#1e4a8c" stroke-width="1.8" stroke-linecap="round"/><path d="M879.0 113.0 L883.8 108.2" stroke="#1e4a8c" stroke-width="1.8" stroke-linecap="round"/><path d="M881.8 114.2 L888.6 114.2" stroke="#1e4a8c" stroke-width="1.8" stroke-linecap="round"/><rect x="904.5" y="65.5" width="14" height="13" fill="#fff" stroke="#3f6aa6" stroke-width="1"/><rect x="909" y="64" width="10" height="3" fill="#8aa0c0"/><rect x="905" y="66" width="13" height="1" fill="#c9d3e3"/><rect x="906.5" y="69" width="10" height="7" fill="#8a8a8a" stroke="#5a5ad0" stroke-width="1"/><rect x="907" y="71" width="9" height="1.5" fill="#c0c0c0"/><rect x="904.5" y="90.5" width="14" height="13" fill="#fff" stroke="#3f6aa6" stroke-width="1"/><rect x="909" y="89" width="10" height="3" fill="#8aa0c0"/><rect x="905" y="91" width="13" height="1" fill="#c9d3e3"/><rect x="906.5" y="94" width="10" height="7" fill="#8a8a8a" stroke="#d04040" stroke-width="1"/><rect x="907" y="96" width="9" height="1.5" fill="#c0c0c0"/><rect x="904.5" y="115.5" width="14" height="13" fill="#fff" stroke="#3f6aa6" stroke-width="1"/><rect x="909" y="114" width="10" height="3" fill="#8aa0c0"/><rect x="905" y="116" width="13" height="1" fill="#c9d3e3"/><rect x="906.5" y="119" width="10" height="7" fill="#8a8a8a" stroke="#40a040" stroke-width="1"/><rect x="907" y="121" width="9" height="1.5" fill="#c0c0c0"/><rect x="929.5" y="65.5" width="14" height="13" fill="#fff" stroke="#3f6aa6" stroke-width="1"/><rect x="934" y="64" width="10" height="3" fill="#8aa0c0"/><rect x="930" y="66" width="13" height="1" fill="#c9d3e3"/><circle cx="936" cy="72" r="3" fill="none" stroke="#8aa0c0" stroke-width="1.2" stroke-dasharray="1 0.8"/><path d="M965 66.5 A22.5 22.5 0 0 1 987.5 89 H973.5 A8.5 9.5 0 0 0 965 79.5 Z" fill="#fff" stroke="#2f5e9a" stroke-width="1.6" stroke-linejoin="round"/><path d="M1002.5 65.5 H1015.5 V71.5 Q1020 67.5 1028 66.8 V76.5 Q1016 77.5 1015.5 89.5 V90.5 H1002.5 Z" fill="#fff" stroke="#2f5e9a" stroke-width="1.6" stroke-linejoin="round"/><path d="M1055 75 Q1060 68 1066.5 66.5 V75.5 Q1062 76.5 1059.5 80" fill="#fff" stroke="#9aaac8" stroke-width="1.2"/><path d="M1043.5 65.5 A15 17 0 0 1 1059 81.5 V90.5 H1049.5 V84 Q1049.5 77 1043.5 75.5 Z" fill="#fff" stroke="#2f5e9a" stroke-width="1.6" stroke-linejoin="round"/><path d="M1047 70 Q1052 73 1054 78 M1057 76 Q1060 72 1063 71" stroke="#8a9ac0" stroke-width="0.8" fill="none"/><path d="M963.5 106 H988.5 L983 128 H969.5 Z" fill="#fff" stroke="#2f5e9a" stroke-width="1.6" stroke-linejoin="round"/><path d="M1001.5 104.5 Q1010 105 1015 110 Q1020 105 1028.5 104.5 V115.5 Q1020.5 116.5 1020.5 125 V129.5 H1009.5 V125 Q1009.5 116.5 1001.5 115.5 Z" fill="#fff" stroke="#2f5e9a" stroke-width="1.6" stroke-linejoin="round"/><rect x="1039.5" y="108.5" width="29.5" height="16.5" fill="#fff" stroke="#2f5e9a" stroke-width="1.6"/><path d="M1048 113 H1060 M1057.5 111 L1060 113 L1057.5 115 M1048 120.5 H1060 M1050.5 118.5 L1048 120.5 L1050.5 122.5" stroke="#6a80a8" stroke-width="0.8" fill="none"/></svg>
<div class="rl" style="left:-11px;top:98.5px;width:80px;color:#000">General
settings</div>
<div class="rl" style="left:61px;top:98.5px;width:80px;color:#000">Room</div>
<div class="rl" style="left:104.5px;top:98.5px;width:80px;color:#000">Obstacle</div>
<div class="rl" style="left:182.5px;top:98.5px;width:80px;color:#000">Manifold</div>
<div class="rl" style="left:224.5px;top:98.5px;width:80px;color:#000">Circuit</div>
<div class="rl" style="left:272px;top:98.5px;width:80px;color:#000">Peripheral
area</div>
<div class="rl" style="left:319.5px;top:98.5px;width:80px;color:#000">Pattern</div>
<div class="rl" style="left:370.5px;top:98.5px;width:80px;color:#000">Connection
pipe</div>
<div class="rl" style="left:518.5px;top:98.5px;width:80px;color:#000">Radiator</div>
<div class="rl" style="left:564px;top:98.5px;width:80px;color:#000">Radiant
panel</div>
<div class="rl" style="left:612px;top:98.5px;width:80px;color:#000">Towel rail
radiator</div>
<div class="rl" style="left:663.5px;top:98.5px;width:80px;color:#000">Electrical
emitter</div>
<div class="rl" style="left:764.5px;top:98.5px;width:80px;color:#000">Straight
duct</div>
<svg style="left:283px;top:163px;" width="26" height="485" viewBox="283 163 26 485"><path d="M292.5 172.5 L302.5 182" stroke="#000" stroke-width="2"/><path d="M289 172.5 Q288.5 168 293 168.5 L291.5 171 L293 172.8 L295.8 171.3 Q296 175.5 291 174.8Z" fill="#000"/><path d="M290 182.5 L299 173.5" stroke="#000" stroke-width="2"/><path d="M295 171.5 L299.5 167.5 L304.5 172 L302.3 174.3 L299.5 172.3 L297.5 174Z" fill="#c8b830" stroke="#000" stroke-width="0.9" stroke-linejoin="round"/><path d="M290.5 206 V199 A5.5 5.5 0 0 1 301.5 199 V206 H297.8 V199 A1.8 1.8 0 0 0 294.2 199 V206Z" fill="#e8101a" stroke="#000" stroke-width="1.1"/><rect x="290.7" y="203.5" width="3.3" height="2.4" fill="#fff"/><rect x="298" y="203.5" width="3.3" height="2.4" fill="#fff"/><rect x="291.2" y="218.8" width="9.8" height="10" fill="none" stroke="#6e3a0e" stroke-width="2.4"/><path d="M292.5 240 V256 M296.5 240 V256 M300.5 240 V256 M288 243.5 H304 M288 247.5 H304 M288 251.5 H304" stroke="#5a5a5a" stroke-width="0.9"/><rect x="292.5" y="268" width="7" height="7" fill="none" stroke="#8a4a10" stroke-width="1.6"/><rect x="295.5" y="271" width="1.2" height="1.2" fill="#000"/><rect x="289" y="265" width="1" height="1" fill="#333"/><rect x="289" y="271.5" width="1" height="1" fill="#333"/><rect x="289" y="278" width="1" height="1" fill="#333"/><rect x="296" y="265" width="1" height="1" fill="#333"/><rect x="296" y="278" width="1" height="1" fill="#333"/><rect x="303" y="265" width="1" height="1" fill="#333"/><rect x="303" y="271.5" width="1" height="1" fill="#333"/><rect x="303" y="278" width="1" height="1" fill="#333"/><rect x="288" y="291" width="16" height="8.5" rx="1" fill="#666" stroke="#444" stroke-width="0.8"/><path d="M289.5 293.5 H302.5 M289.5 295.5 H302.5" stroke="#ddd" stroke-width="0.8" stroke-dasharray="1 1"/><path d="M291 297.8 H301" stroke="#ddd" stroke-width="0.8"/><rect x="290.5" y="313.5" width="11" height="7" fill="#999" stroke="#666" stroke-width="0.8"/><text x="291.5" y="319.5" font-size="5.5" font-weight="bold" font-family="Liberation Mono" fill="#000">4.4</text><path d="M288.5 325.5 H303.5 M288.5 323 V328 M303.5 323 V328" stroke="#222" stroke-width="1"/><path d="M289 348.5 H303 M293.5 348.5 V338.5 M293.5 343 Q298 343 299 348.5" stroke="#111" stroke-width="1.1" fill="none"/><rect x="295" y="345.5" width="1.3" height="1.3" fill="#111"/><rect x="289.5" y="361" width="3.5" height="3" fill="none" stroke="#1a3a8c" stroke-width="1.2"/><rect x="298.5" y="362" width="4" height="3" fill="none" stroke="#1a3a8c" stroke-width="1.2"/><path d="M293 362.5 H298.5" stroke="#1a3a8c" stroke-width="1.2"/><rect x="289.5" y="366.5" width="13" height="9" fill="none" stroke="#555" stroke-width="0.8" stroke-dasharray="1 1"/><rect x="292" y="368" width="3" height="2.5" fill="none" stroke="#e06a20" stroke-width="1"/><rect x="298" y="372" width="3" height="2.5" fill="none" stroke="#e06a20" stroke-width="1"/><path d="M295 369.2 H299 V372" stroke="#e06a20" stroke-width="1" fill="none"/><path d="M289 402.5 H303" stroke="#9c9c9c" stroke-width="1.5"/><path d="M292 395 L300 401 M300 395 L292 401" stroke="#9c9c9c" stroke-width="1.4"/><path d="M289 403.8 H303" stroke="#f4f4f4" stroke-width="0.8"/><path d="M289 422 H303" stroke="#9c9c9c" stroke-width="2"/><path d="M292 416 L300 428 M300 416 L292 428" stroke="#9c9c9c" stroke-width="1.6"/><path d="M291 424 H302" stroke="#f4f4f4" stroke-width="0.7"/><path d="M290 458.5 H300" stroke="#9c9c9c" stroke-width="3.2" stroke-linecap="round"/><path d="M299 454 L304.5 458.5 L299 463Z" fill="#9c9c9c"/><path d="M290 461 H299 M300 463 L304 459.5" stroke="#f6f6f6" stroke-width="0.9"/><path d="M295.5 475 V488" stroke="#9c9c9c" stroke-width="3.2" stroke-linecap="round"/><path d="M291 475 L295.5 469 L300 475Z" fill="#9c9c9c"/><path d="M298 476 V489 M294 490 H297" stroke="#f6f6f6" stroke-width="0.9"/><path d="M293 507 H303.5" stroke="#9c9c9c" stroke-width="3.2" stroke-linecap="round"/><path d="M293.5 502.5 L288 507 L293.5 511.5Z" fill="#9c9c9c"/><path d="M294 509.5 H304.5 M293.5 512 L290 509" stroke="#f6f6f6" stroke-width="0.9"/><path d="M296.5 523.5 V533.5" stroke="#9c9c9c" stroke-width="3.2" stroke-linecap="round"/><path d="M292 533 L296.5 538.5 L301 533Z" fill="#9c9c9c"/><path d="M299 524 V533 M297 539 L301 535" stroke="#f6f6f6" stroke-width="0.9"/><circle cx="292.5" cy="559.5" r="2.6" fill="#9c9c9c"/><rect x="299.5" y="549.5" width="4" height="4" fill="#9c9c9c"/><path d="M293 559 L300.5 552" stroke="#9c9c9c" stroke-width="1.6"/><text x="290" y="554" font-size="7" font-weight="bold" fill="#9c9c9c" font-family="Liberation Sans">?</text><path d="M294 561.5 L302 554" stroke="#f6f6f6" stroke-width="0.7"/><rect x="292" y="583" width="7" height="10" fill="#9c9c9c"/><path d="M291 581 V593 M289.5 582.5 L291 580 L292.5 582.5" stroke="#9c9c9c" stroke-width="1"/><path d="M292 594.5 H300 V583" stroke="#f6f6f6" stroke-width="0.8" fill="none"/><rect x="292" y="606" width="7" height="11" fill="#9c9c9c"/><path d="M293.5 603.5 L295.5 601.5 L297.5 603.5" stroke="#9c9c9c" stroke-width="1" fill="none"/><path d="M292 618.5 H300 V606" stroke="#f6f6f6" stroke-width="0.8" fill="none"/><rect x="292" y="630" width="6.5" height="11" fill="#9c9c9c"/><path d="M299.5 628 V642 M298 630 L299.5 627.5 L301 630" stroke="#9c9c9c" stroke-width="1" fill="none"/><path d="M292 642.5 H301 V630" stroke="#f6f6f6" stroke-width="0.8" fill="none"/></svg>
<svg style="left:20px;top:166px;" width="250" height="22" viewBox="20 166 250 22"><path d="M23.5 170.5 H32 L34.5 173.5 V183.5 H23.5Z" fill="#fff" stroke="#000" stroke-width="1"/><path d="M31.5 170.5 V173.5 H34.5" fill="none" stroke="#000" stroke-width="0.8"/><path d="M24.5 183.7 H34.7 V174" stroke="#777" stroke-width="1" fill="none"/><path d="M25.5 177.5 H32.5 M29 174 V181" stroke="#1a1a80" stroke-width="1.6"/><path d="M46.5 170.5 H55 L57.5 173.5 V183.5 H46.5Z" fill="#fff" stroke="#000" stroke-width="1"/><path d="M54.5 170.5 V173.5 H57.5" fill="none" stroke="#000" stroke-width="0.8"/><path d="M47.5 183.7 H57.7 V174" stroke="#777" stroke-width="1" fill="none"/><path d="M45.5 183.5 L59 170.5" stroke="#ff1010" stroke-width="2.2"/><path d="M67.5 169.5 H75 L77 171.5 V181.5 H67.5Z" fill="#fff0a0" stroke="#000" stroke-width="1"/><path d="M69 171 H75 M69 173 H75 M69 175 H75 M69 177 H75 M69 179 H75" stroke="#e8e860" stroke-width="1" stroke-dasharray="1 1"/><path d="M71.5 171.5 H80 L82.5 174.5 V184.5 H71.5Z" fill="#fff" stroke="#000" stroke-width="1"/><path d="M79.5 171.5 V174.5 H82.5" fill="none" stroke="#000" stroke-width="0.8"/><path d="M72.5 184.7 H82.7 V175" stroke="#777" stroke-width="1" fill="none"/><path d="M92.5 170.5 H101 L103.5 173.5 V183.5 H92.5Z" fill="#fff" stroke="#000" stroke-width="1"/><path d="M100.5 170.5 V173.5 H103.5" fill="none" stroke="#000" stroke-width="0.8"/><path d="M93.5 183.7 H103.7 V174" stroke="#777" stroke-width="1" fill="none"/><path d="M94 178.5 L97 176 H104 Q106 176 106 178.5 Q106 181 104 181 H97Z" fill="#f8f000" stroke="#000" stroke-width="0.9"/><rect x="103.5" y="176.3" width="2.5" height="4.5" fill="#e01010"/><path d="M112.5 168 V186" stroke="#8c8c8c" stroke-width="1"/><path d="M128.3 170 L134.5 176.5 H131 V184 H125.5 V176.5 H122Z" fill="#0010f8" stroke="#000040" stroke-width="0.8"/><path d="M151.7 184 L158 177.5 H154.5 V170 H149 V177.5 H145.5Z" fill="#0010f8" stroke="#000040" stroke-width="0.8"/><path d="M166.5 168 V186" stroke="#8c8c8c" stroke-width="1"/><path d="M175.5 170.5 H187 L190.5 173.5 V184 H175.5Z" fill="#fff" stroke="#000" stroke-width="1"/><text x="177" y="177" font-size="5.5" font-weight="bold" font-family="Liberation Mono" fill="#000">DXF</text><text x="177" y="182.5" font-size="5.5" font-weight="bold" font-family="Liberation Mono" fill="#000">DWG</text><path d="M176.5 184.5 H191.5 V174" stroke="#555" stroke-width="1" fill="none"/><text x="198" y="175" font-size="6" font-weight="bold" font-family="Liberation Mono" fill="#8a0a0a">DXF</text><text x="198" y="184.5" font-size="6" font-weight="bold" font-family="Liberation Mono" fill="#8a0a0a">DWG</text><path d="M199 179 H207 M205 177.3 L207.5 179 L205 180.7" stroke="#ff0000" stroke-width="1.2" fill="none"/><rect x="209.5" y="169.5" width="4.5" height="15" fill="#555"/><path d="M209.5 172.5 H214 M209.5 175.5 H214 M209.5 178.5 H214 M209.5 181.5 H214" stroke="#ddd" stroke-width="0.8"/><path d="M220.5 168 V186" stroke="#8c8c8c" stroke-width="1"/><path d="M232 179.3 L237.6 173.2 L243.2 179.3Z" fill="#000"/><path d="M253.5 175 H265 L259.3 181.2Z" fill="#000"/></svg>
<svg style="left:18px;top:555px;" width="20" height="40" viewBox="18 555 20 40"><path d="M30.5 560.5 V565 A5 5 0 1 1 24 562" stroke="#1030d0" stroke-width="2.6" fill="none"/><path d="M26.5 558 H33 V564.5Z" fill="#000"/><path d="M24 565 A4.8 4.8 0 0 0 33 567" stroke="#0a60a0" stroke-width="1" fill="none"/><ellipse cx="28" cy="583.5" rx="7.5" ry="5" fill="#fff" stroke="#000" stroke-width="1.2"/><circle cx="27.5" cy="583.5" r="3.5" fill="#1020d0"/><path d="M19.5 583.5 Q28 572.5 36.5 583.5 Q28 594.5 19.5 583.5" stroke="#e8a010" stroke-width="1.6" fill="none" stroke-dasharray="1.2 1"/><rect x="26.5" y="582" width="1.8" height="1.8" fill="#fff"/></svg>
<svg style="left:38px;top:572px;overflow:hidden" width="232" height="138" viewBox="38 572 232 138"><polygon points="100,599 131,593 131,577 178,586 204,600 208,618 199,666 172,686 150,679 134.5,689 113,671" fill="#cacaca"/><path d="M104 640 L140 650 L205 632 M108 657 L145 668 L202 650 M101 610 L130 620" stroke="#dadada" stroke-width="1.5" fill="none"/><path d="M131 593 V660 M150 625 V679 M178 615 V680" stroke="#bcbcbc" stroke-width="1" fill="none"/><path d="M112 636 L124 640 M114 655 L124 659 M196 628 L204 625 M196 643 L203 640 M163 626 L172 623" stroke="#a8c4d8" stroke-width="2.5" fill="none"/><polygon points="113,670.5 139.5,662 152,667 194,659 199,665.5 172.5,686 149.5,679 134.5,688.5" fill="#a2a4cc"/><path d="M113,670.5 L134.5,688.5 L149.5,679 L172.5,686 L199,665.5" stroke="#8a8cb4" stroke-width="1" fill="none"/><polygon points="137,656 162.5,637 195.5,652.5 184,660.5 172.5,655 156,665.5 144.5,660" fill="none" stroke="#a8c8f0" stroke-width="1.6"/><path d="M161 641 L178 648 M150 653 L166 647" stroke="#c0d8f8" stroke-width="1"/><path d="M166.5 659 V671 M162 639 V641 M168 643 V645 M176 649 V651 M184 652 V654 M156 654 V656" stroke="#e08a20" stroke-width="1.6" stroke-dasharray="1.6 2.5"/><polygon points="129,577.5 144.5,576.5 180.5,583 177.5,586 161,588.5 139.5,585.5 140,583 129.5,580" fill="#cb532e"/><path d="M129.5,580 L140,583 M139.5,585.5 L161,588.5 L177.5,586 L180.5,583" stroke="#983418" stroke-width="1.4" fill="none"/><polygon points="140,590 158,590 204,599.5 200.5,602.5 164,615.5 139.5,608 139.5,605 147.5,603.5 166,604.5 172,602 155,599.5 140,593" fill="#cb532e"/><path d="M139.5,608 L164,615.5 L200.5,602.5 L204,599.5 M140,593 L155,599.5" stroke="#983418" stroke-width="1.4" fill="none"/><polygon points="176,609.5 184,610.5 208,618 203.5,621 176,613.5" fill="#cb532e"/><path d="M176,613.5 L203.5,621 L208,618" stroke="#983418" stroke-width="1.3" fill="none"/><polygon points="104,622.5 128,613.5 149.5,619.5 147.5,622.5 144.5,626.5 128,635 104,625" fill="#cb532e"/><path d="M104,625 L128,635 L144.5,626.5 L147.5,622.5" stroke="#983418" stroke-width="1.6" fill="none"/></svg>
<svg style="left:48px;top:690px;" width="12" height="12" viewBox="48 690 12 12"><path d="M50.5 692 Q49.5 695 50 699" stroke="#10b010" stroke-width="1.2" fill="none"/><path d="M51.5 698 L56 696" stroke="#1010ff" stroke-width="1" stroke-dasharray="1.2 0.8"/><path d="M51.5 700 L57 701" stroke="#ff1010" stroke-width="1" stroke-dasharray="1.2 0.8"/></svg>
<svg style="left:311px;top:162px;overflow:hidden" width="740" height="537" viewBox="311 162 740 537"><g fill="none"><rect x="455" y="268" width="85" height="86" fill="none" stroke="#0a6cfa" stroke-width="2"/><circle cx="497.5" cy="311" r="32.6" fill="none" stroke="#0a6cfa" stroke-width="1.8"/><path d="M512.5 311.0 L523.9 323.7" stroke="#0a6cfa" stroke-width="1.6"/><path d="M512.2 313.8 L521.1 328.4" stroke="#0a6cfa" stroke-width="1.6"/><path d="M511.5 316.4 L517.5 332.4" stroke="#0a6cfa" stroke-width="1.6"/><path d="M510.3 318.9 L513.2 335.7" stroke="#0a6cfa" stroke-width="1.6"/><path d="M508.6 321.1 L508.4 338.2" stroke="#0a6cfa" stroke-width="1.6"/><path d="M506.5 323.0 L503.2 339.7" stroke="#0a6cfa" stroke-width="1.6"/><path d="M504.2 324.4 L497.9 340.3" stroke="#0a6cfa" stroke-width="1.6"/><path d="M501.6 325.4 L492.5 339.9" stroke="#0a6cfa" stroke-width="1.6"/><path d="M498.9 325.9 L487.2 338.4" stroke="#0a6cfa" stroke-width="1.6"/><path d="M496.1 325.9 L482.4 336.1" stroke="#0a6cfa" stroke-width="1.6"/><path d="M493.4 325.4 L478.0 332.9" stroke="#0a6cfa" stroke-width="1.6"/><path d="M490.8 324.4 L474.3 328.9" stroke="#0a6cfa" stroke-width="1.6"/><path d="M488.5 323.0 L471.4 324.4" stroke="#0a6cfa" stroke-width="1.6"/><path d="M486.4 321.1 L469.4 319.4" stroke="#0a6cfa" stroke-width="1.6"/><path d="M484.7 318.9 L468.4 314.1" stroke="#0a6cfa" stroke-width="1.6"/><path d="M483.5 316.4 L468.3 308.6" stroke="#0a6cfa" stroke-width="1.6"/><path d="M482.8 313.8 L469.2 303.3" stroke="#0a6cfa" stroke-width="1.6"/><path d="M482.5 311.0 L471.1 298.3" stroke="#0a6cfa" stroke-width="1.6"/><path d="M482.8 308.2 L473.9 293.6" stroke="#0a6cfa" stroke-width="1.6"/><path d="M483.5 305.6 L477.5 289.6" stroke="#0a6cfa" stroke-width="1.6"/><path d="M484.7 303.1 L481.8 286.3" stroke="#0a6cfa" stroke-width="1.6"/><path d="M486.4 300.9 L486.6 283.8" stroke="#0a6cfa" stroke-width="1.6"/><path d="M488.5 299.0 L491.8 282.3" stroke="#0a6cfa" stroke-width="1.6"/><path d="M490.8 297.6 L497.1 281.7" stroke="#0a6cfa" stroke-width="1.6"/><path d="M493.4 296.6 L502.5 282.1" stroke="#0a6cfa" stroke-width="1.6"/><path d="M496.1 296.1 L507.8 283.6" stroke="#0a6cfa" stroke-width="1.6"/><path d="M498.9 296.1 L512.6 285.9" stroke="#0a6cfa" stroke-width="1.6"/><path d="M501.6 296.6 L517.0 289.1" stroke="#0a6cfa" stroke-width="1.6"/><path d="M504.2 297.6 L520.7 293.1" stroke="#0a6cfa" stroke-width="1.6"/><path d="M506.5 299.0 L523.6 297.6" stroke="#0a6cfa" stroke-width="1.6"/><path d="M508.6 300.9 L525.6 302.6" stroke="#0a6cfa" stroke-width="1.6"/><path d="M510.3 303.1 L526.6 307.9" stroke="#0a6cfa" stroke-width="1.6"/><path d="M511.5 305.6 L526.7 313.4" stroke="#0a6cfa" stroke-width="1.6"/><path d="M512.2 308.2 L525.8 318.7" stroke="#0a6cfa" stroke-width="1.6"/><rect x="884" y="268" width="86" height="86" fill="none" stroke="#0a6cfa" stroke-width="2"/><circle cx="927" cy="311" r="32.6" fill="none" stroke="#0a6cfa" stroke-width="1.8"/><path d="M942.0 311.0 L953.4 323.7" stroke="#0a6cfa" stroke-width="1.6"/><path d="M941.7 313.8 L950.6 328.4" stroke="#0a6cfa" stroke-width="1.6"/><path d="M941.0 316.4 L947.0 332.4" stroke="#0a6cfa" stroke-width="1.6"/><path d="M939.8 318.9 L942.7 335.7" stroke="#0a6cfa" stroke-width="1.6"/><path d="M938.1 321.1 L937.9 338.2" stroke="#0a6cfa" stroke-width="1.6"/><path d="M936.0 323.0 L932.7 339.7" stroke="#0a6cfa" stroke-width="1.6"/><path d="M933.7 324.4 L927.4 340.3" stroke="#0a6cfa" stroke-width="1.6"/><path d="M931.1 325.4 L922.0 339.9" stroke="#0a6cfa" stroke-width="1.6"/><path d="M928.4 325.9 L916.7 338.4" stroke="#0a6cfa" stroke-width="1.6"/><path d="M925.6 325.9 L911.9 336.1" stroke="#0a6cfa" stroke-width="1.6"/><path d="M922.9 325.4 L907.5 332.9" stroke="#0a6cfa" stroke-width="1.6"/><path d="M920.3 324.4 L903.8 328.9" stroke="#0a6cfa" stroke-width="1.6"/><path d="M918.0 323.0 L900.9 324.4" stroke="#0a6cfa" stroke-width="1.6"/><path d="M915.9 321.1 L898.9 319.4" stroke="#0a6cfa" stroke-width="1.6"/><path d="M914.2 318.9 L897.9 314.1" stroke="#0a6cfa" stroke-width="1.6"/><path d="M913.0 316.4 L897.8 308.6" stroke="#0a6cfa" stroke-width="1.6"/><path d="M912.3 313.8 L898.7 303.3" stroke="#0a6cfa" stroke-width="1.6"/><path d="M912.0 311.0 L900.6 298.3" stroke="#0a6cfa" stroke-width="1.6"/><path d="M912.3 308.2 L903.4 293.6" stroke="#0a6cfa" stroke-width="1.6"/><path d="M913.0 305.6 L907.0 289.6" stroke="#0a6cfa" stroke-width="1.6"/><path d="M914.2 303.1 L911.3 286.3" stroke="#0a6cfa" stroke-width="1.6"/><path d="M915.9 300.9 L916.1 283.8" stroke="#0a6cfa" stroke-width="1.6"/><path d="M918.0 299.0 L921.3 282.3" stroke="#0a6cfa" stroke-width="1.6"/><path d="M920.3 297.6 L926.6 281.7" stroke="#0a6cfa" stroke-width="1.6"/><path d="M922.9 296.6 L932.0 282.1" stroke="#0a6cfa" stroke-width="1.6"/><path d="M925.6 296.1 L937.3 283.6" stroke="#0a6cfa" stroke-width="1.6"/><path d="M928.4 296.1 L942.1 285.9" stroke="#0a6cfa" stroke-width="1.6"/><path d="M931.1 296.6 L946.5 289.1" stroke="#0a6cfa" stroke-width="1.6"/><path d="M933.7 297.6 L950.2 293.1" stroke="#0a6cfa" stroke-width="1.6"/><path d="M936.0 299.0 L953.1 297.6" stroke="#0a6cfa" stroke-width="1.6"/><path d="M938.1 300.9 L955.1 302.6" stroke="#0a6cfa" stroke-width="1.6"/><path d="M939.8 303.1 L956.1 307.9" stroke="#0a6cfa" stroke-width="1.6"/><path d="M941.0 305.6 L956.2 313.4" stroke="#0a6cfa" stroke-width="1.6"/><path d="M941.7 308.2 L955.3 318.7" stroke="#0a6cfa" stroke-width="1.6"/><path d="M311 493 H433 V536 H311 M433 493 L438 492.5 L476 485 M433 536 L438 536.5 L476 544" stroke="#0a6cfa" stroke-width="2"/><path d="M476 354 V544 M519 354 V544 M572 485 V544 M615 485 V544 M476 485 H615 M476 544 H615" stroke="#0a6cfa" stroke-width="2"/><path d="M905 354 V544 M948 354 V544 M808 485 V544 M851 485 V544 M808 485 H948 M808 544 H948" stroke="#0a6cfa" stroke-width="2"/><path d="M948 485 L953 485.5 L986 492.5 L991 493 H1051 M948 544 L953 543.5 L986 536.5 L991 536 H1051 M991 493 V536" stroke="#0a6cfa" stroke-width="2"/><path d="M615 485 A120 120 0 0 1 712 533 A120 120 0 0 1 808 485" stroke="#0a6cfa" stroke-width="2"/><path d="M615 544 A64.5 64.5 0 0 1 680 607.5 V697 M808 544 A64 64 0 0 0 744 607.5 V697 M680 609 H744" stroke="#0a6cfa" stroke-width="2"/><path d="M311 515.5 H615 M808 515.5 H1051 M497.5 358 V515 M927.5 358 V515 M712.5 612 V696" stroke="#0a6cfa" stroke-width="1" stroke-dasharray="3 3"/><path d="M615 515.5 A94 94 0 0 1 709.5 609 M808 515.5 A93.5 93.5 0 0 0 715.5 609" stroke="#0a6cfa" stroke-width="1" stroke-dasharray="3 3"/><path d="M465.3 505 L444 515.5 L465.3 526" stroke="#0a6cfa" stroke-width="2"/><path d="M496.7 505 L476.5 515.5 L496.7 526" stroke="#0a6cfa" stroke-width="2"/><path d="M556.3 505 L534.7 515.5 L556.3 526" stroke="#0a6cfa" stroke-width="2"/><path d="M604 505 L583 515.5 L604 526" stroke="#0a6cfa" stroke-width="2"/><path d="M819.7 505 L840.8 515.5 L819.7 526" stroke="#0a6cfa" stroke-width="2"/><path d="M868.3 505 L889.7 515.5 L868.3 526" stroke="#0a6cfa" stroke-width="2"/><path d="M927.5 505 L947.5 515.5 L927.5 526" stroke="#0a6cfa" stroke-width="2"/><path d="M959.7 505 L981.3 515.5 L959.7 526" stroke="#0a6cfa" stroke-width="2"/><path d="M486.5 430 L497.5 410 L508.5 430" stroke="#0a6cfa" stroke-width="1.2"/><path d="M487.0 507 L497.5 485.5 L508.5 506.5" stroke="#0a6cfa" stroke-width="1.2"/><path d="M916.5 430 L927.5 410 L938.5 430" stroke="#0a6cfa" stroke-width="1.2"/><path d="M917.0 507 L927.5 485.5 L938.5 506.5" stroke="#0a6cfa" stroke-width="1.2"/><path d="M696.8 542 L675.2 536 L682.4 556.5 M727.7 542 L750 536 L742.7 556.5" stroke="#0a6cfa" stroke-width="1.6"/></g><text x="557.3" y="386.3" font-size="65" fill="#9e7348" font-family="Liberation Sans">Dining room</text><text transform="translate(574 376.5) rotate(-90)" font-size="21.4" fill="#000" font-family="Liberation Sans">TROX-VDW 400x16</text><text transform="translate(595 375.7) rotate(-90)" font-size="21.4" fill="#000" font-family="Liberation Sans">96 l/s</text><text transform="translate(1009.3 398.8) rotate(-90)" font-size="21.4" fill="#000" font-family="Liberation Sans">TROX-VDW 400x16</text><text transform="translate(1029.6 398.5) rotate(-90)" font-size="21.4" fill="#000" font-family="Liberation Sans">96 l/s</text><text x="466.5" y="441" font-size="21" fill="#000" font-family="Liberation Sans">275 x 175 mm</text><text x="466.5" y="462.5" font-size="21" fill="#000" font-family="Liberation Sans">192 l/s</text><text x="466.5" y="483.5" font-size="21" fill="#000" font-family="Liberation Sans">Galvanized Steel</text><text x="799.8" y="441" font-size="21" fill="#000" font-family="Liberation Sans">275 x 175 mm</text><text x="799.8" y="462.5" font-size="21" fill="#000" font-family="Liberation Sans">192 l/s</text><text x="799.8" y="483.5" font-size="21" fill="#000" font-family="Liberation Sans">Galvanized Steel</text><text x="327.5" y="418.5" font-size="21" fill="#000" text-anchor="end" font-family="Liberation Sans">275 x 175 mm</text><text x="352.5" y="461.5" font-size="21" fill="#000" text-anchor="end" font-family="Liberation Sans">Galvanized Steel</text></svg>
</body></html>
